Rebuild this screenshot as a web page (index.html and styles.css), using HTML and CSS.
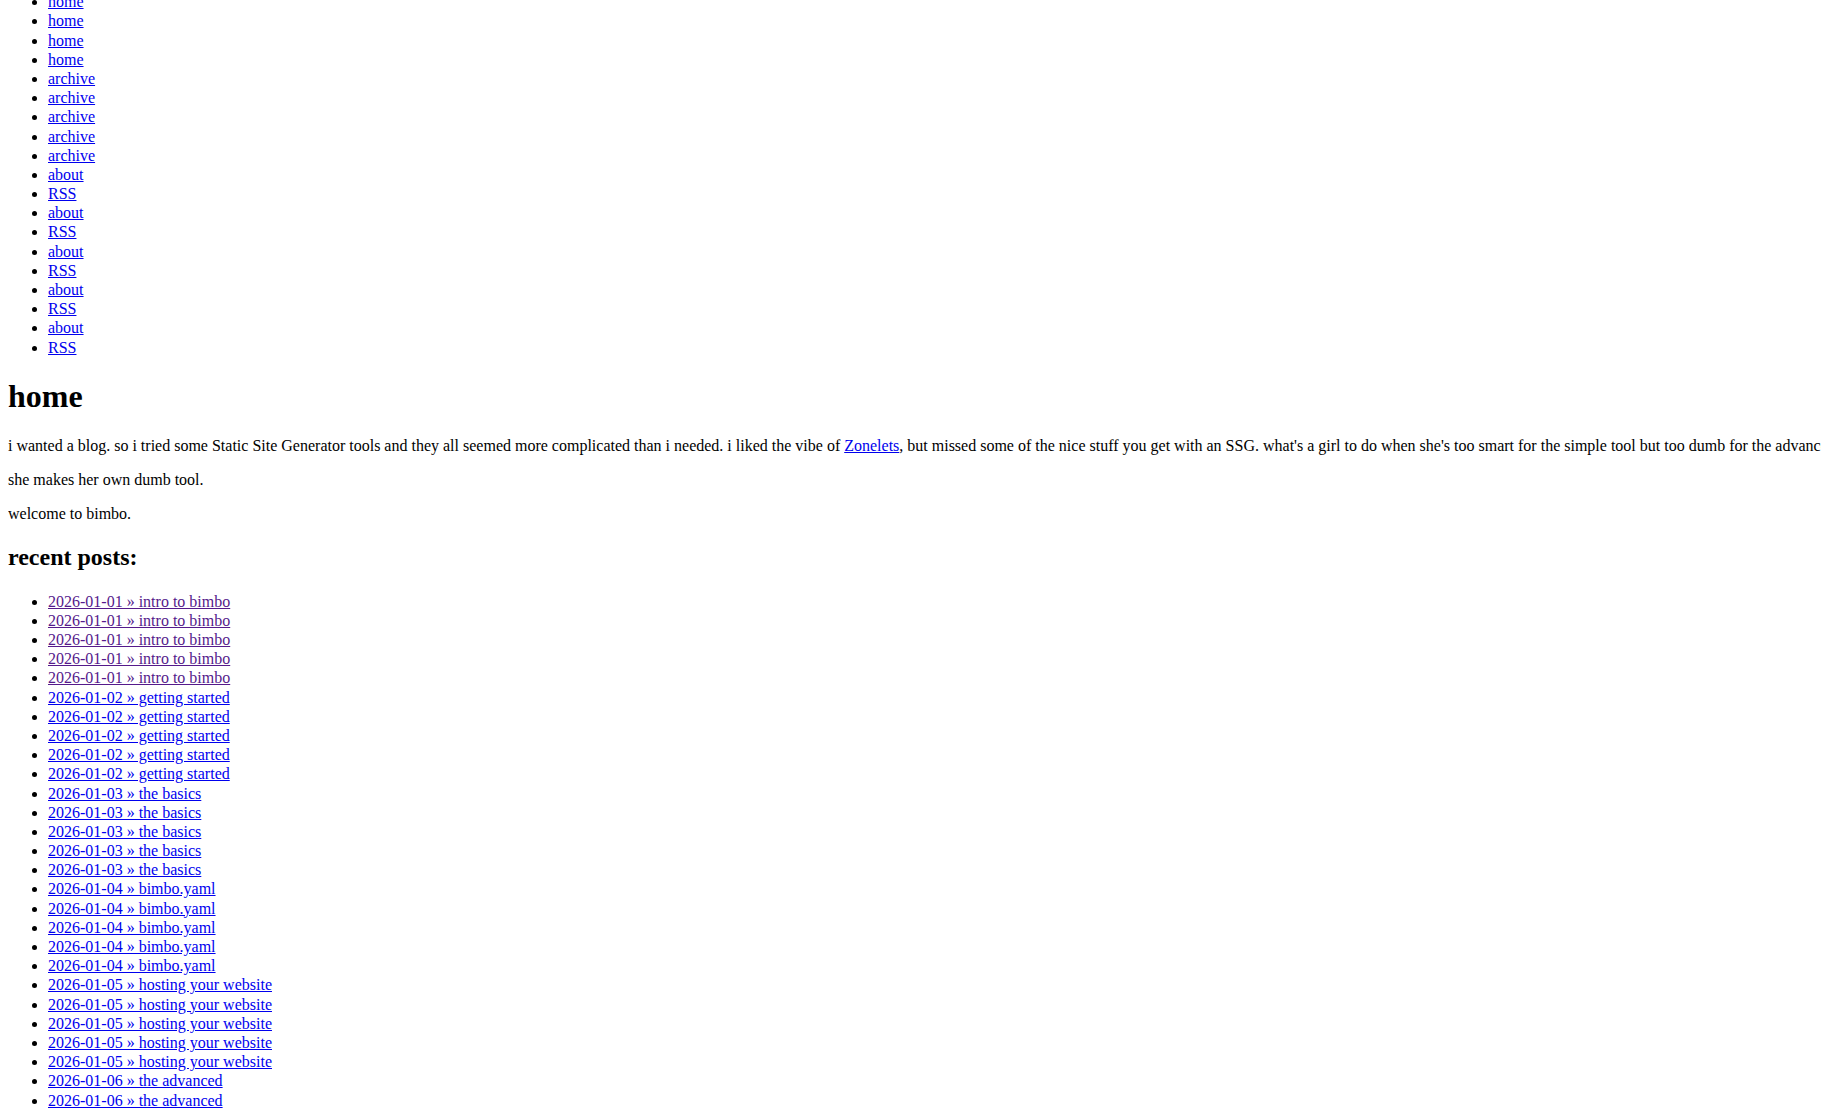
FILE: index.html
```html
<!DOCTYPE html>
<html lang="en">
<head>
    <meta charset="UTF-8">
    <meta name="viewport" content="width=device-width, initial-scale=1.0">
    <title>home</title>
    <link rel="stylesheet" href="styles.css">
</head>
<body>
    <ul class="nav">
        <li><a href="#">home</a></li>
        <li><a href="#">home</a></li>
        <li><a href="#">home</a></li>
        <li><a href="#">home</a></li>
        <li><a href="#">home</a></li>
        <li><a href="#">archive</a></li>
        <li><a href="#">archive</a></li>
        <li><a href="#">archive</a></li>
        <li><a href="#">archive</a></li>
        <li><a href="#">archive</a></li>
        <li><a href="#">about</a></li>
        <li><a href="#">RSS</a></li>
        <li><a href="#">about</a></li>
        <li><a href="#">RSS</a></li>
        <li><a href="#">about</a></li>
        <li><a href="#">RSS</a></li>
        <li><a href="#">about</a></li>
        <li><a href="#">RSS</a></li>
        <li><a href="#">about</a></li>
        <li><a href="#">RSS</a></li>
    </ul>

    <h1>home</h1>

    <p class="intro">i wanted a blog. so i tried some Static Site Generator tools and they all seemed more complicated than i needed. i liked the vibe of <a href="#">Zonelets</a>, but missed some of the nice stuff you get with an SSG. what's a girl to do when she's too smart for the simple tool but too dumb for the advanced ones?</p>
    <p>she makes her own dumb tool.</p>
    <p>welcome to bimbo.</p>

    <h2>recent posts:</h2>
    <ul class="posts">
        <li><a class="seen" href="#">2026-01-01 &raquo; intro to bimbo</a></li>
        <li><a class="seen" href="#">2026-01-01 &raquo; intro to bimbo</a></li>
        <li><a class="seen" href="#">2026-01-01 &raquo; intro to bimbo</a></li>
        <li><a class="seen" href="#">2026-01-01 &raquo; intro to bimbo</a></li>
        <li><a class="seen" href="#">2026-01-01 &raquo; intro to bimbo</a></li>
        <li><a href="#">2026-01-02 &raquo; getting started</a></li>
        <li><a href="#">2026-01-02 &raquo; getting started</a></li>
        <li><a href="#">2026-01-02 &raquo; getting started</a></li>
        <li><a href="#">2026-01-02 &raquo; getting started</a></li>
        <li><a href="#">2026-01-02 &raquo; getting started</a></li>
        <li><a href="#">2026-01-03 &raquo; the basics</a></li>
        <li><a href="#">2026-01-03 &raquo; the basics</a></li>
        <li><a href="#">2026-01-03 &raquo; the basics</a></li>
        <li><a href="#">2026-01-03 &raquo; the basics</a></li>
        <li><a href="#">2026-01-03 &raquo; the basics</a></li>
        <li><a href="#">2026-01-04 &raquo; bimbo.yaml</a></li>
        <li><a href="#">2026-01-04 &raquo; bimbo.yaml</a></li>
        <li><a href="#">2026-01-04 &raquo; bimbo.yaml</a></li>
        <li><a href="#">2026-01-04 &raquo; bimbo.yaml</a></li>
        <li><a href="#">2026-01-04 &raquo; bimbo.yaml</a></li>
        <li><a href="#">2026-01-05 &raquo; hosting your website</a></li>
        <li><a href="#">2026-01-05 &raquo; hosting your website</a></li>
        <li><a href="#">2026-01-05 &raquo; hosting your website</a></li>
        <li><a href="#">2026-01-05 &raquo; hosting your website</a></li>
        <li><a href="#">2026-01-05 &raquo; hosting your website</a></li>
        <li><a href="#">2026-01-06 &raquo; the advanced</a></li>
        <li><a href="#">2026-01-06 &raquo; the advanced</a></li>
        <li><a href="#">2026-01-06 &raquo; the advanced</a></li>
        <li><a href="#">2026-01-06 &raquo; the advanced</a></li>
        <li><a href="#">2026-01-06 &raquo; the advanced</a></li>
    </ul>
</body>
</html>
```

FILE: styles.css
```css
html{
    overflow: hidden;
}
body{
    margin: -43px 8px 8px 8px;
    font-family: "Liberation Serif", "Times New Roman", serif;
    font-size: 16px;
    color: #000;
    background: #fff;
}
a{
    color: #0000ee;
}
a.seen{
    color: #551a8b;
}
h2{
    margin: 21px 0;
}
li{
    line-height: 1.2;
}
.intro{
    white-space: nowrap;
}
```
